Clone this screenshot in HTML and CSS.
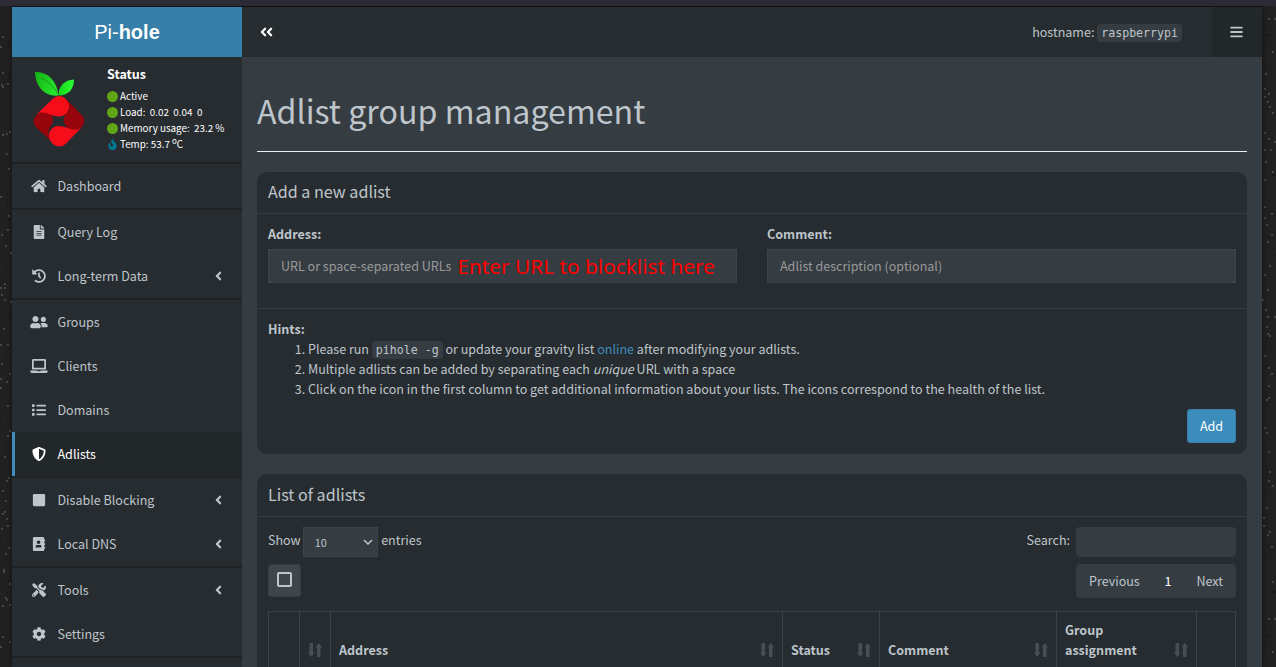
FILE: index.html
```html
<!DOCTYPE html>
<html lang="en">
<head>
<meta charset="utf-8">
<title>Pi-hole - Adlist group management</title>
<link rel="stylesheet" href="styles.css">
</head>
<body>
<svg class="icon-defs" aria-hidden="true">
  <symbol id="home" viewBox="0 0 576 512"><path d="M280.37 148.26L96 300.11V464a16 16 0 0 0 16 16l112.06-.29a16 16 0 0 0 15.92-16V368a16 16 0 0 1 16-16h64a16 16 0 0 1 16 16v95.64a16 16 0 0 0 16 16.05L464 480a16 16 0 0 0 16-16V300L295.67 148.26a12.19 12.19 0 0 0-15.3 0zM571.6 251.47L488 182.56V44.05a12 12 0 0 0-12-12h-56a12 12 0 0 0-12 12v72.61L318.47 43a48 48 0 0 0-61 0L4.34 251.47a12 12 0 0 0-1.6 16.9l25.5 31A12 12 0 0 0 45.15 301l235.22-193.74a12.19 12.19 0 0 1 15.3 0L530.9 301a12 12 0 0 0 16.9-1.6l25.5-31a12 12 0 0 0-1.7-16.93z"/></symbol>
  <symbol id="file" viewBox="0 0 384 512"><path d="M224 136V0H24C10.7 0 0 10.7 0 24v464c0 13.300 10.700 24 24 24h336c13.300 0 24-10.700 24-24V160H248c-13.200 0-24-10.800-24-24zm64 236c0 6.600-5.400 12-12 12H108c-6.600 0-12-5.400-12-12v-8c0-6.600 5.400-12 12-12h168c6.600 0 12 5.400 12 12v8zm0-64c0 6.600-5.400 12-12 12H108c-6.600 0-12-5.400-12-12v-8c0-6.600 5.400-12 12-12h168c6.600 0 12 5.400 12 12v8zm0-72v8c0 6.600-5.400 12-12 12H108c-6.600 0-12-5.400-12-12v-8c0-6.600 5.400-12 12-12h168c6.600 0 12 5.400 12 12zm96-114.100v6.100H256V0h6.100c6.400 0 12.500 2.500 17 7l97.900 98c4.500 4.500 7 10.600 7 16.900z"/></symbol>
  <symbol id="history" viewBox="0 0 512 512"><path d="M504 255.531c.253 136.640-111.180 248.372-247.820 248.468-59.015.042-113.223-20.530-155.822-54.911-11.077-8.940-11.905-25.541-1.839-35.607l11.267-11.267c8.609-8.609 22.353-9.551 31.891-1.984C173.062 425.135 212.781 440 256 440c101.705 0 184-82.311 184-184 0-101.705-82.311-184-184-184-48.814 0-93.149 18.969-126.068 49.932l50.754 50.754c10.080 10.080 2.941 27.314-11.313 27.314H24c-8.837 0-16-7.163-16-16V38.627c0-14.254 17.234-21.393 27.314-11.314l49.372 49.372C129.209 34.136 189.552 8 256 8c136.810 0 247.747 110.780 248 247.531zm-180.912 78.784l9.823-12.630c8.138-10.463 6.253-25.542-4.210-33.679L288 256.349V152c0-13.255-10.745-24-24-24h-16c-13.255 0-24 10.745-24 24v135.651l65.409 50.874c10.463 8.137 25.541 6.253 33.679-4.210z"/></symbol>
  <symbol id="users" viewBox="0 0 640 512"><path d="M192 256c61.900 0 112-50.100 112-112S253.900 32 192 32 80 82.100 80 144s50.100 112 112 112zm76.800 32h-8.300c-20.800 10-43.900 16-68.500 16s-47.600-6-68.500-16h-8.300C51.600 288 0 339.600 0 403.200V432c0 26.500 21.500 48 48 48h288c26.500 0 48-21.500 48-48v-28.800c0-63.600-51.600-115.200-115.200-115.200zM480 256c53 0 96-43 96-96s-43-96-96-96-96 43-96 96 43 96 96 96zm48 32h-3.800c-13.900 4.800-28.600 8-44.200 8s-30.300-3.200-44.200-8H432c-20.400 0-39.200 5.900-55.700 15.400 24.400 26.300 39.700 61.200 39.700 99.800v38.400c0 2.200-.5 4.300-.6 6.400H592c26.500 0 48-21.500 48-48 0-61.900-50.100-112-112-112z"/></symbol>
  <symbol id="laptop" viewBox="0 0 640 512"><path d="M624 416H381.540c-.74 19.810-14.710 32-32.740 32H288c-18.690 0-33.020-17.470-32.770-32H16c-8.800 0-16 7.200-16 16v16c0 35.200 28.800 64 64 64h512c35.200 0 64-28.800 64-64v-16c0-8.800-7.200-16-16-16zM576 48c0-26.400-21.600-48-48-48H112C85.600 0 64 21.600 64 48v336h512V48zm-64 272H128V64h384v256z"/></symbol>
  <symbol id="list" viewBox="0 0 512 512"><path d="M16 48h64q16 0 16 16v64q0 16-16 16H16q-16 0-16-16V64q0-16 16-16zm0 160h64q16 0 16 16v64q0 16-16 16H16q-16 0-16-16v-64q0-16 16-16zm0 160h64q16 0 16 16v64q0 16-16 16H16q-16 0-16-16v-64q0-16 16-16zM176 64h320q16 0 16 16v32q0 16-16 16H176q-16 0-16-16V80q0-16 16-16zm0 160h320q16 0 16 16v32q0 16-16 16H176q-16 0-16-16v-32q0-16 16-16zm0 160h320q16 0 16 16v32q0 16-16 16H176q-16 0-16-16v-32q0-16 16-16z"/></symbol>
  <symbol id="shield" viewBox="0 0 512 512"><path d="M466.500 83.700l-192-80a48.150 48.150 0 0 0-36.900 0l-192 80C27.700 91.100 16 108.600 16 128c0 198.500 114.500 335.700 221.500 380.300 11.800 4.900 25.100 4.900 36.900 0C360.100 472.600 496 349.300 496 128c0-19.400-11.700-36.900-29.500-44.300zM256.100 446.300l-.1-381 175.900 73.300c-3.300 151.400-82.100 261.100-175.800 307.700z"/></symbol>
  <symbol id="stop" viewBox="0 0 448 512"><path d="M400 32H48C21.500 32 0 53.500 0 80v352c0 26.500 21.500 48 48 48h352c26.500 0 48-21.500 48-48V80c0-26.500-21.500-48-48-48z"/></symbol>
  <symbol id="address" viewBox="0 0 448 512"><path d="M436 160c6.600 0 12-5.400 12-12v-40c0-6.600-5.400-12-12-12h-20V48c0-26.500-21.500-48-48-48H48C21.500 0 0 21.500 0 48v416c0 26.500 21.500 48 48 48h320c26.500 0 48-21.500 48-48v-48h20c6.600 0 12-5.400 12-12v-40c0-6.600-5.400-12-12-12h-20v-64h20c6.600 0 12-5.400 12-12v-40c0-6.600-5.400-12-12-12h-20v-64h20zm-228-32c35.300 0 64 28.700 64 64s-28.700 64-64 64-64-28.700-64-64 28.700-64 64-64zm112 236.800c0 10.600-10 19.200-22.400 19.200H118.400C106 384 96 375.400 96 364.800v-19.200c0-31.800 30.100-57.600 67.200-57.600h5c12.300 5.100 25.700 8 39.800 8s27.600-2.900 39.800-8h5c37.100 0 67.200 25.800 67.200 57.600v19.200z"/></symbol>
  <symbol id="tools" viewBox="0 0 512 512"><path d="M501.100 395.700L384 278.600c-23.100-23.100-57.600-27.600-85.400-13.900L192 158.100V96L64 0 0 64l96 128h62.100l106.600 106.600c-13.600 27.800-9.200 62.300 13.900 85.400l117.100 117.100c14.600 14.600 38.200 14.600 52.700 0l52.700-52.700c14.500-14.600 14.500-38.200 0-52.700zM331.700 225c28.300 0 54.900 11 74.900 31l19.400 19.400c15.800-6.900 30.800-16.500 43.800-29.500 37.100-37.100 49.700-89.300 37.900-136.700-2.200-9-13.500-12.100-20.100-5.500l-74.400 74.400-67.900-11.300L334 98.900l74.400-74.400c6.600-6.600 3.400-17.900-5.700-20.200-47.400-11.700-99.600.9-136.600 37.900-28.500 28.500-41.900 66.100-41.200 103.600l82.100 82.100c8.100-1.900 16.500-2.900 24.700-2.900zm-103.900 82l-56.700-56.700L18.700 402.800c-25 25-25 65.500 0 90.500s65.500 25 90.500 0l123.600-123.600c-7.600-19.900-9.900-41.600-5-62.700zM64 472c-13.200 0-24-10.800-24-24 0-13.300 10.700-24 24-24s24 10.700 24 24c0 13.200-10.700 24-24 24z"/></symbol>
  <symbol id="cog" viewBox="0 0 512 512"><path d="M487.400 315.700l-42.600-24.600c4.300-23.200 4.300-47 0-70.200l42.600-24.600c4.900-2.800 7.100-8.600 5.500-14-11.100-35.600-30-67.800-54.700-94.600-3.800-4.100-10-5.100-14.800-2.300L380.800 110c-17.900-15.400-38.500-27.300-60.800-35.100V25.800c0-5.600-3.900-10.500-9.400-11.700-36.700-8.200-74.300-7.800-109.200 0-5.500 1.200-9.400 6.100-9.400 11.700V75c-22.200 7.900-42.800 19.800-60.800 35.100L88.700 85.500c-4.900-2.800-11-1.900-14.800 2.300-24.700 26.700-43.600 58.900-54.700 94.600-1.700 5.400.6 11.200 5.500 14L67.300 221c-4.300 23.200-4.300 47 0 70.200l-42.600 24.600c-4.900 2.800-7.100 8.600-5.500 14 11.100 35.600 30 67.800 54.700 94.600 3.800 4.100 10 5.100 14.800 2.300l42.600-24.600c17.900 15.400 38.500 27.300 60.800 35.100v49.200c0 5.600 3.900 10.500 9.400 11.700 36.700 8.200 74.300 7.800 109.200 0 5.500-1.200 9.400-6.100 9.400-11.700v-49.200c22.200-7.900 42.800-19.800 60.800-35.100l42.600 24.600c4.900 2.800 11 1.900 14.800-2.300 24.700-26.700 43.600-58.900 54.700-94.600 1.500-5.500-.7-11.300-5.600-14.100zM256 336c-44.100 0-80-35.900-80-80s35.900-80 80-80 80 35.900 80 80-35.900 80-80 80z"/></symbol>
  <symbol id="angle" viewBox="0 0 256 512"><path d="M31.700 239l136-136c9.400-9.400 24.600-9.400 33.900 0l22.600 22.600c9.400 9.400 9.400 24.600 0 33.900L127.900 256l96.400 96.400c9.400 9.400 9.400 24.600 0 33.900L201.700 409c-9.400 9.400-24.600 9.400-33.900 0l-136-136c-9.500-9.400-9.500-24.600-.1-34z"/></symbol>
  <symbol id="bars" viewBox="0 0 448 512"><path d="M16 132h416q16 0 16-16V76q0-16-16-16H16Q0 60 0 76v40q0 16 16 16zm0 160h416q16 0 16-16v-40q0-16-16-16H16q-16 0-16 16v40q0 16 16 16zm0 160h416q16 0 16-16v-40q0-16-16-16H16q-16 0-16 16v40q0 16 16 16z"/></symbol>
  <symbol id="fire" viewBox="0 0 384 512"><path fill-rule="evenodd" d="M216 23.860c0-23.800-30.650-32.770-44.150-13.040C48 191.850 224 200 224 288c0 35.630-29.110 64.460-64.850 63.990-35.170-.45-63.150-29.770-63.150-64.940v-85.510c0-21.700-26.470-32.230-41.430-16.500C27.800 213.160 0 261.330 0 320c0 105.870 86.130 192 192 192s192-86.130 192-192c0-170.290-168-193-168-296.140z"/></symbol>
  <symbol id="sort" viewBox="0 0 14 14"><path d="M1.500 0h3.500v9.500h1.500L3.250 14 0 9.500h1.500zM9 14h3.500V4.500H14L10.750 0 7.500 4.500H9z"/></symbol>
</svg>

<svg class="texture" viewBox="0 0 1276 667" aria-hidden="true">
  <path stroke="#1a1a1a" d="M8 42h2M8 74h2M3 94h2M1 161h2M6 200h2M8 220h2M5 234h2M3 252h2M5 266h2M3 282h2M9 313h2M4 355h2M8 360h2M0 421h2M7 448h2M1 470h2M0 538h2M9 576h2M6 593h2M1269 30h2M1267 35h2M1270 35h2M1265 47h2M1269 68h2M1272 175h4M1268 220h2M1267 237h2M1274 255h2M1268 320h2M1269 349h2M1265 467h2M1269 485h2M1265 493h2M1267 524h2M1265 558h2M1274 592h2M1269 630h2M1270 635h2M1267 636h2M1265 647h2"/>
  <path stroke="#484848" d="M2 37h2M0 47h2M2 73h2M7 84h2M1 85h2M2 87h2M6 134h2M9 132h2M2 135h2M6 154h2M0 197h2M8 169h2M8 216h2M7 230h2M1 235h2M5 246h2M10 253h2M4 284h2M0 288h2M4 288h2M1 295h2M4 300h2M10 302h2M3 329h2M0 345h2M7 345h2M1 364h2M9 374h2M0 379h2M6 382h2M0 388h2M7 406h2M9 431h2M7 436h2M4 457h2M8 478h2M6 481h2M2 491h2M5 501h2M4 512h2M2 514h2M6 519h2M7 526h2M1 529h2M8 548h2M5 554h2M3 570h2M3 572h2M9 584h2M5 598h2M6 600h2M2 606h2M9 605h2M2 637h2M9 642h2M0 647h2M1268 19h2M1274 19h2M1272 52h2M1265 74h2M1264 89h2M1268 94h2M1264 97h2M1267 102h2M1269 107h2M1272 113h2M1264 133h2M1268 139h2M1274 142h2M1264 150h2M1270 150h2M1265 162h2M1272 172h2M1264 180h2M1264 207h2M1271 214h2M1264 218h2M1266 225h2M1271 235h2M1267 242h2M1269 266h2M1264 275h2M1267 290h2M1262 300h2M1265 310h2M1267 317h2M1274 317h2M1266 327h2M1267 334h2M1269 336h2M1264 356h2M1268 368h2M1271 374h2M1268 386h2M1268 398h2M1266 400h2M1264 428h2M1266 433h2M1268 452h2M1269 472h2M1268 481h2M1272 486h2M1266 508h2M1263 518h2M1263 526h2M1269 532h2M1267 535h2M1271 547h2M1272 582h2M1268 619h2M1274 619h2M1272 652h2"/>
</svg>

<div class="wrapper">
  <header class="topbar">
    <a class="brand">Pi-<b>hole</b></a>
    <nav class="navbar">
      <span class="collapse"><svg><use href="#angle"/></svg><svg><use href="#angle"/></svg></span>
      <span class="host">hostname: <code>raspberrypi</code></span>
      <span class="burger"><svg><use href="#bars"/></svg></span>
    </nav>
  </header>

  <div class="columns">
    <aside class="sidebar">
      <div class="status">
        <svg class="logo" viewBox="0 0 52 76">
          <defs>
            <linearGradient id="leaf1" x1="0" x2="1" y2=".4"><stop stop-color="#12b212"/><stop offset="1" stop-color="#27e52c"/></linearGradient>
            <linearGradient id="leaf2" x1="0" x2="1"><stop stop-color="#16d41b"/><stop offset="1" stop-color="#2cff35"/></linearGradient>
          </defs>
          <path fill="url(#leaf1)" d="M2 0C15 0 23.500 8 25.500 23.500 11 25 2.500 14 2 0z"/>
          <path fill="none" stroke="#14801a" stroke-width=".7" d="M8 6c7 3 13 9 17 16"/>
          <path fill="url(#leaf2)" d="M25.500 23.500C25.500 13.500 31.500 8 41 7.500c0 9-5 16-15.500 16z"/>
          <path fill="#96060c" d="M30 26l18 16.500c4 4.500 4 8.500 0 13C42 61 33 58 31 50c-1-5 1-9 5-11z"/>
          <path fill="#96060c" d="M4 42.500c5-4.500 13-3 15.500 2.500 1.500 4-.5 8-3 11-1.500 4-1 8 2 13.500L4 56c-4.500-4.500-4.500-9 0-13.500z"/>
          <path fill="#f60d1a" d="M4 42L19.500 27c4-4 9.500-4 13.500 0 7 7.500 1 18-7.500 17.500C17 44 12 37.500 4 42z"/>
          <path fill="#f60d1a" d="M48.500 55.500L33 71.500c-4 4-9.500 4-13.500 0-7-8-2-17.500 6-17.500 9 0 14 7 23 1.500z"/>
          <path fill="#96060c" d="M34.500 30c5 5 1.500 10-1 13-3 5-1 12 5 14 4 1 8 0 10.500-2.500 3-3.500 3-7.500 0-11L34 28z"/>
        </svg>
        <div class="info">
          <b>Status</b>
          <p><i class="dot"></i>Active</p>
          <p><i class="dot"></i>Load:&nbsp; 0.02&nbsp; 0.04&nbsp; 0</p>
          <p><i class="dot"></i>Memory usage:&nbsp; 23.2&#8201;%</p>
          <p><svg class="fire"><use href="#fire"/></svg>Temp: 53.7&#8201;<sup>o</sup>C</p>
        </div>
      </div>
      <ul class="menu">
        <li class="sep"><svg><use href="#home"/></svg><span>Dashboard</span></li>
        <li class="sep"><svg><use href="#file"/></svg><span>Query Log</span></li>
        <li><svg><use href="#history"/></svg><span>Long-term Data</span><svg class="chev"><use href="#angle"/></svg></li>
        <li class="sep"><svg><use href="#users"/></svg><span>Groups</span></li>
        <li><svg><use href="#laptop"/></svg><span>Clients</span></li>
        <li><svg><use href="#list"/></svg><span>Domains</span></li>
        <li class="active"><svg><use href="#shield"/></svg><span>Adlists</span></li>
        <li class="sep"><svg><use href="#stop"/></svg><span>Disable Blocking</span><svg class="chev"><use href="#angle"/></svg></li>
        <li><svg><use href="#address"/></svg><span>Local DNS</span><svg class="chev"><use href="#angle"/></svg></li>
        <li class="sep"><svg><use href="#tools"/></svg><span>Tools</span><svg class="chev"><use href="#angle"/></svg></li>
        <li><svg><use href="#cog"/></svg><span>Settings</span></li>
        <li class="sep"></li>
      </ul>
    </aside>

    <main class="content">
      <h1>Adlist group management</h1>

      <section class="box add-box">
        <h3>Add a new adlist</h3>
        <div class="fields">
          <div class="field"><label>Address:</label><div class="input">URL or space-separated URLs<span class="note">Enter URL to blocklist here</span></div></div>
          <div class="field"><label>Comment:</label><div class="input">Adlist description (optional)</div></div>
        </div>
        <div class="hints">
          <b>Hints:</b>
          <ol>
            <li>Please run <code>pihole -g</code> or update your gravity list <a>online</a> after modifying your adlists.</li>
            <li>Multiple adlists can be added by separating each <em>unique</em> URL with a space</li>
            <li>Click on the icon in the first column to get additional information about your lists. The icons correspond to the health of the list.</li>
          </ol>
          <button class="add">Add</button>
        </div>
      </section>

      <section class="box list-box">
        <h3>List of adlists</h3>
        <div class="controls">
          <div class="left">
            <div class="show">Show <span class="select">10<svg viewBox="0 0 10 6"><path d="M1 1l4 4 4-4"/></svg></span> entries</div>
            <button class="check"><i></i></button>
          </div>
          <div class="right">
            <div class="search">Search: <span class="searchbox"></span></div>
            <div class="pager"><span>Previous</span><span class="current">1</span><span>Next</span></div>
          </div>
        </div>
        <div class="table">
          <div></div>
          <div><svg><use href="#sort"/></svg></div>
          <div><b>Address</b><svg><use href="#sort"/></svg></div>
          <div><b>Status</b><svg><use href="#sort"/></svg></div>
          <div><b>Comment</b><svg><use href="#sort"/></svg></div>
          <div><b>Group<br>assignment</b><svg><use href="#sort"/></svg></div>
          <div></div>
        </div>
      </section>
    </main>
  </div>
</div>
</body>
</html>
```
FILE: styles.css
```css
* { box-sizing: border-box; }
html, body { height: 100%; margin: 0; overflow: hidden; }
body {
  background: #222;
  border-top: 6px solid #2c2a35;
  color: #bec5cb;
  font: 12.54px/20px "Noto Sans CJK JP", "Noto Sans", sans-serif;
}
ul, ol, p, h1, h3 { margin: 0; padding: 0; }
svg { fill: currentColor; flex: none; }
.icon-defs { display: none; }
.texture {
  position: absolute;
  top: 0;
  left: 0;
  width: 1276px;
  height: 667px;
  fill: none;
  stroke-width: 2;
}
code {
  font: 11.6px/18px "DejaVu Sans Mono", monospace;
  background: #353c42;
  border-radius: 4px;
  padding: 2px 4px;
}

.wrapper {
  position: relative;
  width: 1250px;
  height: 661px;
  margin-left: 12px;
  border-top: 1px solid #111;
  background: #353c42;
  box-shadow: 0 0 8px rgba(0, 0, 0, .5);
  overflow: hidden;
}
.topbar { display: flex; height: 50px; }
.brand {
  width: 230px;
  background: #367fa9;
  color: #fff;
  text-align: center;
  font: 20px/50px "Liberation Sans", Arial, sans-serif;
}
.navbar { flex: 1; display: flex; align-items: center; background: #272c30; }
.collapse { display: flex; margin-left: 18px; color: #fff; }
.collapse svg { width: 7px; height: 16px; }
.collapse svg + svg { margin-left: -1px; }
.host { margin-left: auto; margin-right: 30px; }
.burger {
  width: 50px; height: 50px;
  display: flex; align-items: center; justify-content: center;
  background: #22272a;
}
.burger svg { width: 13px; height: 14px; margin-right: 1px; }

.columns { display: flex; }
.sidebar { width: 230px; height: 611px; background: #272c30; }
.status { display: flex; height: 105px; padding: 15px 0 0 21px; color: #fff; }
.logo { width: 52px; height: 76px; }
.info { margin-left: 22px; font-size: 9.85px; line-height: 16px; }
.info b { display: block; font-size: 12.54px; line-height: 14px; margin: -5px 0 7px; }
.info p { display: flex; align-items: center; height: 16px; white-space: pre; }
.info sup { font-size: 8px; line-height: 1; align-self: flex-start; margin-top: 1px; }
.dot { width: 11px; height: 11px; border-radius: 50%; background: #5fa516; margin-right: 2px; }
.fire { width: 9px; height: 11px; margin: 0 3px 0 1px; color: #007997; }

.menu { list-style: none; }
.menu li { display: flex; align-items: center; height: 44px; padding: 0 20px 0 17.5px; }
.menu li > svg:first-child { width: 18px; height: 14px; margin-right: 10px; }
.menu .sep { height: 46px; border-top: 2px solid #1f2326; }
.menu .active { background: #22272a; border-left: 3px solid #3c8dbc; padding-left: 14.5px; color: #fff; }
.menu .chev { width: 7px; height: 14px; margin-left: auto; }

.content { flex: 1; padding: 15px; }
h1 {
  height: 80px;
  border-bottom: 1px solid #eee;
  font-size: 32.2px;
  line-height: 76px;
  font-weight: 400;
}
.box { margin-top: 20px; background: #272c30; border-radius: 10px; }
h3 {
  height: 42px;
  margin: 0 1px;
  padding: 0 10px;
  border-bottom: 1px solid #353c42;
  font-size: 16.1px;
  line-height: 39px;
  font-weight: 400;
}
.add-box { height: 282px; }
.fields { display: flex; gap: 30px; height: 94px; padding: 10px 11px 0; }
.field { flex: 1; }
label { display: block; font-weight: 700; line-height: 20px; margin-bottom: 5px; }
.input {
  display: flex; align-items: center;
  height: 34px;
  padding: 0 12px;
  border: 1px solid #3d444b;
  background: #353c42;
  color: #999;
}
.note { margin-left: 6px; color: #f00; font: 20.8px/30px "Noto Sans", sans-serif; white-space: nowrap; }
.hints { margin: 0 1px; border-top: 1px solid #353c42; padding: 10px 10px; }
.hints b { display: block; }
ol { padding-left: 40px; }
ol li { height: 20px; white-space: nowrap; }
a { color: #3c8dbc; }
button { font: inherit; padding: 0; }
.add {
  display: block;
  width: 49px; height: 34px;
  margin: 10px 0 0 auto;
  border: 1px solid #367fa9;
  border-radius: 3px;
  background: #3c8dbc;
  color: #fff;
}
.list-box { height: 260px; }
.list-box h3 { height: 43px; line-height: 41px; }
.controls { display: flex; justify-content: space-between; height: 94px; padding: 10px 11px 0; }
.show, .search { display: flex; height: 30px; line-height: 26px; }
.select {
  display: flex; align-items: center; justify-content: space-between;
  width: 75px; height: 30px;
  margin: 0 3.5px 0 2px;
  padding: 0 4px 1px 11px;
  border: 1px solid #3d444b;
  background: #353c42;
  font-size: 10.8px;
}
.select svg { width: 10px; height: 6px; margin-top: 1px; fill: none; stroke: #bec5cb; stroke-width: 1.5; }
.check {
  display: flex; align-items: center; justify-content: center;
  width: 33px; height: 33px;
  margin-top: 7px;
  border: 1px solid #353c42;
  border-radius: 3px;
  background: #3e464c;
}
.check i { width: 15px; height: 15px; border: 2px solid #bec5cb; border-radius: 2px; margin-top: -2px; }
.search { justify-content: flex-end; }
.searchbox { width: 160px; height: 30px; margin-left: 6px; background: #353c42; border-radius: 4px; }
.pager {
  display: flex; justify-content: space-between; align-items: center;
  width: 160px; height: 34px;
  margin: 7px 0 0 auto;
  padding: 0 13px;
  background: #353c42;
  border-radius: 4px;
}
.pager .current { color: #fff; }
.table {
  display: grid;
  grid-template-columns: 31px 31px 452px 97px 177px 140px 40px;
  height: 90px;
  margin: 0 11px;
  border-top: 1px solid #3b4248;
}
.table > div {
  display: flex; align-items: flex-end; justify-content: space-between;
  height: 56px;
  padding: 0 8px 8px;
  border-left: 1px solid #3b4248;
}
.table > div:last-child { border-right: 1px solid #3b4248; }
.table svg { width: 14px; height: 14px; margin: 0 0 3px auto; color: #484f54; }
```
